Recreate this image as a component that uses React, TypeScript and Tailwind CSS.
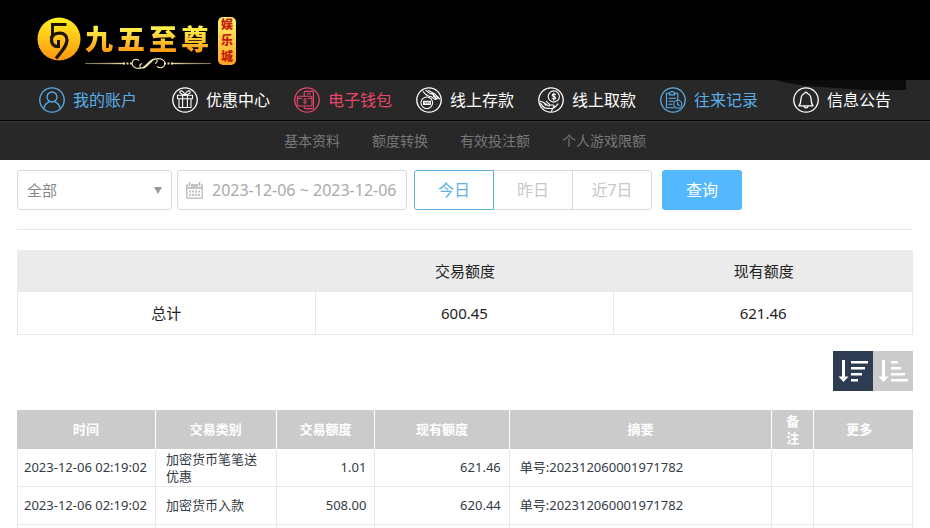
import { useState, type ReactNode } from "react";

const NAV_TONES: Record<string, string> = {
  white: "text-white",
  blue: "text-[#5aaeea]",
  red: "text-[#e8456b]",
};

function Icon({ children }: { children: ReactNode }) {
  return (
    <svg className="size-[26px] shrink-0" viewBox="0 0 26 26" fill="none" stroke="currentColor" strokeWidth="1.1" strokeLinecap="round" strokeLinejoin="round" aria-hidden="true">
      <circle cx="13" cy="13" r="12.2" strokeWidth="1.3" />
      {children}
    </svg>
  );
}

const UserIcon = () => (
  <Icon>
    <circle cx="13" cy="10" r="5" strokeWidth="1.3" />
    <path d="M4.8 21.6c.8-3.8 3-6 5.6-7M21.2 21.6c-.8-3.8-3-6-5.6-7" strokeWidth="1.3" />
  </Icon>
);

const GiftIcon = () => (
  <Icon>
    <path d="M5.5 8.2h15v3.6h-15zM7 11.8h12v8.7H7zM10.6 8.2v12.3M15.4 8.2v12.3" />
    <path d="M13 8c-1-3-3-4.6-4.6-4-1.4.8-.6 3.4 4.6 4zM13 8c1-3 3-4.6 4.6-4 1.4.8.6 3.4-4.6 4z" />
  </Icon>
);

const WalletIcon = () => (
  <Icon>
    <path d="M10.2 9V5.6c0-.8.5-1.2 1.2-1.2h6.8c.8 0 1.2.4 1.2 1.2v14.8c0 .8-.4 1.2-1.2 1.2h-6.8c-.7 0-1.2-.4-1.2-1.2V19" />
    <path d="M4.5 9.2h12.3c.8 0 1.2.4 1.2 1.2v7.4c0 .8-.4 1.2-1.2 1.2H4.5c-.8 0-1.2-.4-1.2-1.2v-7.4c0-.8.4-1.2 1.2-1.2zM13.5 6.8h3M3.5 11.5h4M14 11.5h4" />
    <path d="M12.3 12.5c-.6-.7-2.7-.6-2.7.6 0 1.3 2.8.8 2.8 2.1 0 1.2-2.2 1.3-2.9.4M11 11.5v5.4" strokeWidth=".9" />
  </Icon>
);

const DepositIcon = () => (
  <Icon>
    <circle cx="10.8" cy="15.8" r="5.8" />
    <path d="M7.6 14.2h6.4M7.6 14.2v3.2h6.8v-3.2M9.2 14.5l-.6 2.7M11.2 14.5l-.6 2.7M13.2 14.5l-.6 2.7" />
    <path d="M7.2 4.6c2.2 3 4.5 4.6 8 5.2l3.8 2.6c1 .5 1.5-.4.9-1.1l-2.7-2.5M12.5 3.6l6.3 3.3 4.8 5.1M9.8 3.3l3.9 3.1 3.6 1 3.6 4.6M18.9 6.8l3.2 4.6" />
  </Icon>
);

const WithdrawIcon = () => (
  <Icon>
    <circle cx="15.8" cy="9.5" r="5.6" />
    <path d="M17.5 7.6c-.8-.9-3.3-.7-3.3.7 0 1.6 3.4 1 3.4 2.6 0 1.4-2.7 1.5-3.5.4M15.9 6v7.3" />
    <path d="M2.3 14.3l3.5 1.3 4.6 3.2c1.2.6 1.9-.5 1.1-1.4L8.3 14.4M4.2 18.8c2.8 3.4 6.5 2.8 10.5 2.6 1.8-.4 3.3-2.3 5.3-4.6M2.5 16.3l3.5 4.3M5.8 15.6l2 2.7M14.7 21.4l-1.2 2.8M11.8 17.8l3.2.2c1.6.2 1.4 1.7.2 1.9" />
  </Icon>
);

const RecordsIcon = () => (
  <Icon>
    <path d="M9.3 6.2H6.5v14.5h7.7M14.8 6.2h3v7" />
    <path d="M9.3 7.9V5.7h1.3c.2-2 2.7-2 2.9 0h1.3v2.2zM9 11.2h6.5M9 14.2h4.2M9 17.2h3" />
    <circle cx="17.8" cy="17.2" r="4" />
    <path d="M17.6 15v2.4l1.8 1" />
  </Icon>
);

const BellIcon = () => (
  <Icon>
    <path d="M6 18.8c1.4-1.6 1.7-3 1.9-6.4.2-3.4 1.5-5.2 3.7-5.9.2-1.7 2.6-1.7 2.8 0 2.2.7 3.5 2.5 3.7 5.9.2 3.4.5 4.8 1.9 6.4zM11 19.2c.2 2.3 3.8 2.3 4 0" strokeWidth="1.3" />
  </Icon>
);

const NAV = [
  { label: "我的账户", tone: "blue", icon: <UserIcon />, space: "mr-[11px]" },
  { label: "优惠中心", tone: "white", icon: <GiftIcon />, space: "" },
  { label: "电子钱包", tone: "red", icon: <WalletIcon />, space: "" },
  { label: "线上存款", tone: "white", icon: <DepositIcon />, space: "" },
  { label: "线上取款", tone: "white", icon: <WithdrawIcon />, space: "" },
  { label: "往来记录", tone: "blue", icon: <RecordsIcon />, space: "" },
  { label: "信息公告", tone: "white", icon: <BellIcon />, space: "ml-[11px]" },
];

const SUB_NAV = ["基本资料", "额度转换", "有效投注额", "个人游戏限额"];

const RANGES = ["今日", "昨日", "近7日"];

const COLUMNS = [
  { label: "时间", width: "w-[15.5%] px-3" },
  { label: "交易类别", width: "w-[13.5%] px-3" },
  { label: "交易额度", width: "w-[11%] px-3" },
  { label: "现有额度", width: "w-[15%] px-3" },
  { label: "摘要", width: "w-[29.3%] px-3" },
  { label: "备注", width: "w-[4.7%] px-3" },
  { label: "更多", width: "w-[11%] pr-5 pl-3" },
];

const ROWS = [
  { time: "2023-12-06 02:19:02", type: "加密货币笔笔送优惠", amount: "1.01", balance: "621.46", note: "单号:202312060001971782" },
  { time: "2023-12-06 02:19:02", type: "加密货币入款", amount: "508.00", balance: "620.44", note: "单号:202312060001971782" },
];

function Logo() {
  return (
    <a href="#" className="flex items-start gap-1">
      <svg className="size-11" viewBox="0 0 44 44" fill="none" aria-hidden="true">
        <defs>
          <linearGradient id="coin" x1="0" y1="0" x2="0" y2="1">
            <stop offset="0" stopColor="#fff21c" />
            <stop offset=".5" stopColor="#ffc21a" />
            <stop offset="1" stopColor="#ff9410" />
          </linearGradient>
        </defs>
        <circle cx="22" cy="22" r="21.5" fill="url(#coin)" />
        <path d="M29.5 7.5H15.5V19" stroke="#1c1400" strokeWidth="3" />
        <path d="M14 21.5C17 14.5 29.5 13.500 30 23c0 6-4.500 10-11 18.500" stroke="#1c1400" strokeWidth="3.200" />
        <path d="M15.500 18.500c-2.500 5.500-.5 11.500 6 11v-6.500" stroke="#1c1400" strokeWidth="3" />
      </svg>
      <span className="flex flex-col pt-1">
        <span className="flex h-9 items-center gap-1 text-[28px] leading-9 font-black">
          {["九", "五", "至", "尊"].map((char) => (
            <span key={char} className="bg-linear-to-b from-[#fff04a] from-20% to-[#ff9a10] to-85% bg-clip-text text-transparent">{char}</span>
          ))}
        </span>
        <svg className="h-3.5 w-[126px]" viewBox="0 0 126 14" fill="none" stroke="#f5e4ae" aria-hidden="true">
          <path d="M0 6.500l40-.6v1.200zM126 6.500l-40-.6v1.200z" strokeWidth=".3" fill="#f5e4ae" />
          <path d="M38 6.500h9M79 6.500h9" strokeWidth="2" strokeDasharray="2 1.500" />
          <path d="M54 3.500c-4-3-7 0-7 3s4 6 10 4.500c5-1.500 7-8 12-9 4-.5 4 3.500 1 4.500M72 9.500c4 3 8 0 8-3s-4-6-10-4.500c-5 1.500-7 8-12 9-4 .5-4-3.500-1-4.500M60 9.500c3-1 4-4 7-5" strokeWidth="1.100" />
        </svg>
      </span>
      <span className="ml-[3px] flex w-[18px] flex-col items-center rounded-[5px] bg-linear-to-b from-[#fff36a] to-[#ffa51e] text-xs leading-4 font-black text-[#c41c08]">
        <span>娱</span>
        <span>乐</span>
        <span>城</span>
      </span>
    </a>
  );
}

function CalendarIcon() {
  return (
    <svg className="size-[17px] shrink-0" viewBox="0 0 17 17" aria-hidden="true">
      <path d="M1.500 2h14A1.500 1.500 0 0 1 17 3.500v12a1.500 1.500 0 0 1-1.500 1.500h-14A1.500 1.500 0 0 1 0 15.500v-12A1.500 1.500 0 0 1 1.500 2z" fill="#c4c4c4" />
      <path d="M1.500 7h14v8.500h-14z" fill="#fff" />
      <path d="M3.500 0v5M13.500 0v5" stroke="#fff" strokeWidth="3" />
      <path d="M3.500 0v4M13.500 0v4" stroke="#b8b8b8" strokeWidth="1.500" />
      <path d="M3 8.500h2v2H3zM6 8.500h2v2H6zM9 8.500h2v2H9zM12 8.500h2v2h-2zM3 12h2v2H3zM6 12h2v2H6zM9 12h2v2H9zM12 12h2v2h-2z" fill="#c4c4c4" />
    </svg>
  );
}

function SortIcon({ descending }: { descending: boolean }) {
  const bars = descending ? [17, 14, 11, 7] : [7, 10, 14, 17];
  return (
    <svg className="size-10" viewBox="0 0 40 40" fill="#fff" aria-hidden="true">
      <path d="M9 9h3v16.500h3.500L10.500 31l-5-5.500H9z" />
      {bars.map((width, i) => (
        <rect key={i} x="18" y={10 + i * 6} width={width} height="2.500" />
      ))}
    </svg>
  );
}

export default function App() {
  const [range, setRange] = useState("今日");

  return (
    <div className="bg-white font-['Noto_Sans','Noto_Sans_CJK_SC',sans-serif]">
      <header>
        <div className="h-20 bg-black pt-[17px] pl-[37px]">
          <Logo />
        </div>

        <nav className="relative flex h-10 items-center justify-center bg-[#282828]">
          <svg className="absolute top-0 right-6 h-[10px] w-[130px]" viewBox="0 0 130 10" aria-hidden="true">
            <path d="M0 0h130v10H88L60 8 30 6 12 3z" fill="#0b0b0b" />
          </svg>
          {NAV.map((item) => (
            <a key={item.label} href="#" className={`relative flex items-center gap-2 px-3 text-base leading-6 whitespace-nowrap ${NAV_TONES[item.tone]} ${item.space}`}>
              {item.icon}
              {item.label}
            </a>
          ))}
        </nav>

        <nav className="flex h-10 items-center justify-center gap-8 border-t border-black bg-[#282828] text-sm text-[#777] shadow-[inset_0_1px_0_#3a3a3a]">
          {SUB_NAV.map((label) => (
            <a key={label} href="#">{label}</a>
          ))}
        </nav>
      </header>

      <main className="px-[17px]">
        {/* Filters */}
        <form className="flex items-center border-b border-[#e6e6e6] pt-[10px] pb-[19px]" onSubmit={(e) => e.preventDefault()}>
          <div className="relative">
            <select aria-label="交易类别" className="h-10 w-[155px] appearance-none rounded-[3px] border border-[#d9d9d9] bg-white px-[9px] text-[15px] text-[#888]">
              <option>全部</option>
            </select>
            <svg className="pointer-events-none absolute top-[17px] right-[10px] h-[7px] w-2" viewBox="0 0 8 7" aria-hidden="true">
              <path d="M0 0h8L4 7z" fill="#999" />
            </svg>
          </div>

          <label className="ml-[5px] flex h-10 w-[230px] items-center gap-[9px] rounded-[3px] border border-[#d9d9d9] pl-2">
            <CalendarIcon />
            <input aria-label="日期" className="w-[194px] min-w-0 text-base text-[#aaa] outline-none" defaultValue="2023-12-06 ~ 2023-12-06" />
          </label>

          <div className="ml-[7px] flex">
            {RANGES.map((label) => (
              <button
                key={label}
                type="button"
                onClick={() => setRange(label)}
                className={`-mr-px h-10 w-20 border text-base first:rounded-l-[3px] last:rounded-r-[3px] ${
                  range === label ? "z-10 border-[#62b2e0] text-[#62b2e0]" : "border-[#d9d9d9] text-[#c8c8c8]"
                }`}
              >
                {label}
              </button>
            ))}
          </div>

          <button type="submit" className="ml-[11px] h-10 w-20 rounded-[3px] bg-[#54b8ff] text-base text-white">查询</button>
        </form>

        {/* Totals */}
        <table className="mt-5 w-full table-fixed border-separate border-spacing-0 text-center text-[15px] text-[#222]">
          <thead>
            <tr className="h-[42px] bg-[#ebebeb]">
              <td></td>
              <th className="font-normal">交易额度</th>
              <th className="font-normal">现有额度</th>
            </tr>
          </thead>
          <tbody>
            <tr className="h-[43px]">
              <th className="border-x border-b border-[#e8e8e8] font-normal">总计</th>
              <td className="border-r border-b border-[#e8e8e8]">600.45</td>
              <td className="border-r border-b border-[#e8e8e8]">621.46</td>
            </tr>
          </tbody>
        </table>

        {/* Sort order */}
        <div className="mt-4 flex justify-end">
          <button type="button" aria-label="降序" className="size-10 bg-[#2d3c50]">
            <SortIcon descending />
          </button>
          <button type="button" aria-label="升序" className="size-10 bg-[#cbcbcb]">
            <SortIcon descending={false} />
          </button>
        </div>

        {/* Records */}
        <table className="mt-[19px] w-full table-fixed border-separate border-spacing-0 text-[13px] leading-[17px] text-[#333b45]">
          <thead>
            <tr className="h-[39px] bg-[#cbcbcb] text-white">
              {COLUMNS.map((column) => (
                <th key={column.label} className={`border-r border-white font-bold last:border-[#cbcbcb] ${column.width}`}>{column.label}</th>
              ))}
            </tr>
          </thead>
          <tbody>
            {ROWS.map((row) => (
              <tr key={row.balance} className="h-[38px]">
                <td className="border-x border-b border-[#e8e8e8] pl-[6px] whitespace-nowrap">{row.time}</td>
                <td className="border-r border-b border-[#e8e8e8] px-[10px]">{row.type}</td>
                <td className="border-r border-b border-[#e8e8e8] px-2 text-right">{row.amount}</td>
                <td className="border-r border-b border-[#e8e8e8] px-2 text-right">{row.balance}</td>
                <td className="border-r border-b border-[#e8e8e8] px-[10px]">{row.note}</td>
                <td className="border-r border-b border-[#e8e8e8]"></td>
                <td className="border-r border-b border-[#e8e8e8]"></td>
              </tr>
            ))}
            <tr className="h-[3px]">
              {COLUMNS.map((column) => (
                <td key={column.label} className="border-r border-[#e8e8e8] p-0 first:border-l"></td>
              ))}
            </tr>
          </tbody>
        </table>
      </main>
    </div>
  );
}
